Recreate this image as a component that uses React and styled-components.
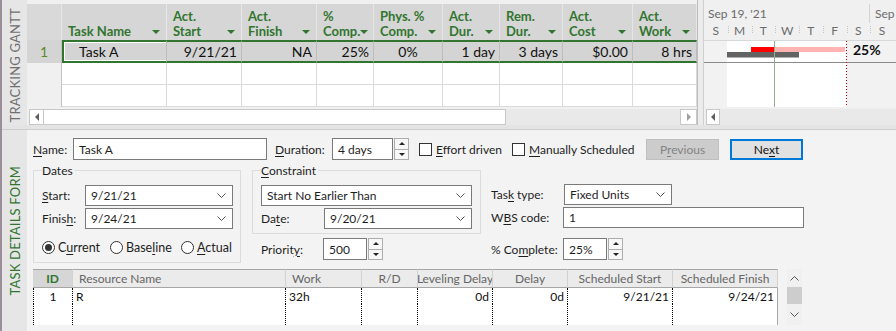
import React from 'react'
import styled, { createGlobalStyle } from 'styled-components'

const GREEN = '#31752f'

const GlobalStyle = createGlobalStyle`
  html, body { margin: 0; padding: 0; background: #f3f3f3; }
  body { font-family: Lato, "Noto Sans", sans-serif; }
`

const columns = [
  { title: ['Task Name'], w: 105, v: 'Task A', align: 'left' },
  { title: ['Act.', 'Start'], w: 75, v: '9/21/21', align: 'right' },
  { title: ['Act.', 'Finish'], w: 75, v: 'NA', align: 'right' },
  { title: ['%', 'Comp.'], w: 57, v: '25%', align: 'right' },
  { title: ['Phys. %', 'Comp.'], w: 69, v: '0%', align: 'center' },
  { title: ['Act.', 'Dur.'], w: 57, v: '1 day', align: 'right' },
  { title: ['Rem.', 'Dur.'], w: 63, v: '3 days', align: 'right' },
  { title: ['Act.', 'Cost'], w: 70, v: '$0.00', align: 'right' },
  { title: ['Act.', 'Work'], w: 64, v: '8 hrs', align: 'right' },
]

const days = ['S', 'M', 'T', 'W', 'T', 'F', 'S', 'S']

const resCols = [
  { title: 'ID', w: 40, v: '1', head: 'id', align: 'center' },
  { title: 'Resource Name', w: 213, v: 'R', head: 'left', align: 'left' },
  { title: 'Work', w: 76, v: '32h', head: 'left', align: 'left' },
  { title: 'R/D', w: 56, v: '', head: 'center', align: 'left' },
  { title: 'Leveling Delay', w: 75, v: '0d', head: 'center', align: 'right' },
  { title: 'Delay', w: 75, v: '0d', head: 'center', align: 'right' },
  { title: 'Scheduled Start', w: 105, v: '9/21/21', head: 'center', align: 'right' },
  { title: 'Scheduled Finish', w: 105, v: '9/24/21', head: 'center', align: 'right', last: true },
]

const Screen = styled.div`
  width: 896px;
  height: 331px;
  overflow: hidden;
  box-sizing: border-box;
  border-left: 2px solid #9b8e99;
  display: flex;
  flex-direction: column;
  background: #f3f3f3;
  color: #1e1e1e;
  font-family: Lato, "Noto Sans", sans-serif;
`

const TopPane = styled.div`
  height: 125px;
  display: flex;
  background: #f0f0f0;
`

const Splitter = styled.div`
  height: 4px;
  background: #e4e4e4;
  border-bottom: 1px solid #cdcdcd;
`

const BottomPane = styled.div`
  flex: 1;
  display: flex;
  min-height: 0;
`

const SideStrip = styled.div`
  width: 25px;
  flex: none;
  background: #e6e6e6;
  display: flex;
  align-items: center;
  justify-content: center;
  padding-top: ${p => p.$offset || 0}px;
  box-sizing: border-box;
`

const SideText = styled.span`
  writing-mode: vertical-rl;
  transform: rotate(180deg);
  font-size: 13px;
  letter-spacing: 0.2px;
  white-space: nowrap;
  color: ${p => p.$color};
`

/* ---------- sheet ---------- */

const SheetPanel = styled.div`
  width: 670px;
  flex: none;
  padding-top: 4px;
  display: flex;
  flex-direction: column;
`

const Sheet = styled.div`
  display: grid;
  grid-template-columns: 35px ${columns.map(c => c.w + 'px').join(' ')};
  grid-template-rows: 36px 23px 22px 22px;
`

const Corner = styled.div`
  background: #d9d9d9;
  border-right: 1px solid #e6e6e6;
`

const HeadCell = styled.div`
  background: #d6d6d6;
  border-right: 1px solid #e6e6e6;
  box-sizing: border-box;
  display: flex;
  align-items: flex-end;
  padding: 0 6px 1px 6px;
  color: ${GREEN};
  font-weight: 700;
  font-size: 13px;
  line-height: 15px;
`

const HeadTitle = styled.div`
  white-space: nowrap;
`

const SortArrow = styled.span`
  margin-left: auto;
  margin-bottom: 5px;
  flex: none;
  width: 0;
  height: 0;
  border-left: 4px solid transparent;
  border-right: 4px solid transparent;
  border-top: 4px solid ${GREEN};
`

const RowNum = styled.div`
  background: ${p => (p.$active ? '#d4d4d4' : '#f0f0f0')};
  border-right: 1px solid #c4c4c4;
  box-sizing: border-box;
  display: flex;
  align-items: center;
  justify-content: center;
  color: #5c8a1f;
  font-size: 14px;
`

const DataCell = styled.div`
  box-sizing: border-box;
  background: #d4d4d4;
  border-top: 2px solid ${GREEN};
  border-bottom: 2px solid ${GREEN};
  border-right: 1px solid #bdbdbd;
  border-left: ${p => (p.$first ? `2px solid ${GREEN}` : 'none')};
  box-shadow: ${p => (p.$first ? 'inset 1px 1px 0 #fff, inset 0 -1px 0 #fff' : 'none')};
  display: flex;
  align-items: center;
  justify-content: ${p => (p.$align === 'right' ? 'flex-end' : p.$align === 'center' ? 'center' : 'flex-start')};
  padding: 0 4px 0 ${p => (p.$first ? 15 : 4)}px;
  font-size: 14px;
  color: #111;
  white-space: nowrap;
`

const EmptyCell = styled.div`
  background: #fff;
  border-right: 1px solid #dadada;
  border-bottom: 1px solid #dadada;
`

const HScroll = styled.div`
  height: 16px;
  margin: 2px 0 0 ${p => p.$indent}px;
  display: flex;
  background: #e9e9e9;
`

const ScrollBtn = styled.div`
  width: ${p => p.$w || 15}px;
  flex: none;
  box-sizing: border-box;
  background: #fff;
  border: 1px solid #c8c8c8;
  display: flex;
  align-items: center;
  justify-content: center;
`

const ScrollThumb = styled.div`
  width: ${p => p.$w}px;
  flex: none;
  box-sizing: border-box;
  background: #fff;
  border: 1px solid #c8c8c8;
  border-left: none;
`

const Track = styled.div`
  flex: 1;
`

const Tri = styled.span`
  width: 0;
  height: 0;
  border-top: 4px solid transparent;
  border-bottom: 4px solid transparent;
  ${p => (p.$dir === 'left' ? 'border-right: 4px solid #606060;' : 'border-left: 4px solid #a0a0a0;')}
`

const Divider = styled.div`
  width: 5px;
  flex: none;
  background: #ececec;
  border-left: 1px solid #bdbdbd;
`

/* ---------- gantt ---------- */

const GanttPanel = styled.div`
  flex: 1;
  padding-top: 4px;
  border-left: 1px solid #cfcfcf;
  display: flex;
  flex-direction: column;
`

const GanttHead = styled.div`
  height: 37px;
  box-sizing: border-box;
  background: #f0f0f0;
  border-bottom: 1px solid #d8d8d8;
  color: #6b6b6b;
  font-size: 12px;
`

const TopTier = styled.div`
  height: 19px;
  display: flex;
  align-items: center;
`

const WeekLabel = styled.div`
  width: ${p => p.$w}px;
  flex: none;
  box-sizing: border-box;
  padding-left: ${p => p.$pad}px;
  border-right: ${p => (p.$sep ? '1px solid #d4d4d4' : 'none')};
  height: 100%;
  display: flex;
  align-items: center;
  white-space: nowrap;
`

const BottomTier = styled.div`
  height: 17px;
  display: grid;
  grid-template-columns: repeat(8, 23.75px);
`

const DayCell = styled.div`
  position: relative;
  display: flex;
  justify-content: center;
  align-items: center;
  padding-bottom: 3px;
  &::before {
    content: '';
    position: absolute;
    left: 0;
    top: 3px;
    height: 7px;
    border-left: ${p => (p.$tick ? '1px dotted #c4c4c4' : 'none')};
  }
`

const Chart = styled.svg`
  display: block;
`

/* ---------- form ---------- */

const FormArea = styled.div`
  flex: 1;
  padding: 8px 0 0 6px;
  display: flex;
  flex-direction: column;
  font-size: 12px;
  color: #1e1e1e;
`

const Line = styled.div`
  display: flex;
  align-items: center;
  height: ${p => p.$h || 21}px;
  margin-top: ${p => p.$mt || 0}px;
  padding-left: ${p => p.$pl || 0}px;
  flex: none;
`

const Label = styled.span`
  width: ${p => p.$w}px;
  margin-left: ${p => p.$ml || 0}px;
  flex: none;
  white-space: nowrap;
`

const Mn = styled.u`
  text-underline-offset: 2px;
`

const TextBox = styled.div`
  width: ${p => p.$w}px;
  height: ${p => p.$h || 21}px;
  flex: none;
  box-sizing: border-box;
  border: 1px solid #7a7a7a;
  background: #fff;
  display: flex;
  align-items: center;
  padding-left: 5px;
`

const SelectBox = styled(TextBox)`
  justify-content: space-between;
  padding-right: 6px;
`

const Spinner = styled.div`
  width: 15px;
  height: 22px;
  margin-left: 1px;
  flex: none;
  display: flex;
  flex-direction: column;
`

const SpinBtn = styled.div`
  flex: 1;
  box-sizing: border-box;
  border: 1px solid #adadad;
  background: #f7f7f7;
  display: flex;
  align-items: center;
  justify-content: center;
  & + & {
    border-top: none;
  }
`

const SpinTri = styled.span`
  width: 0;
  height: 0;
  border-left: 3px solid transparent;
  border-right: 3px solid transparent;
  ${p => (p.$up ? 'border-bottom: 3px solid #222;' : 'border-top: 3px solid #222;')}
`

const CheckItem = styled.div`
  width: ${p => p.$w}px;
  margin-left: ${p => p.$ml || 0}px;
  flex: none;
  display: flex;
  align-items: center;
  gap: 4px;
  white-space: nowrap;
`

const CheckBox = styled.span`
  width: 13px;
  height: 13px;
  box-sizing: border-box;
  border: 1px solid #333;
  background: #fff;
  flex: none;
`

const Button = styled.div`
  width: 73px;
  height: 21px;
  margin-left: ${p => p.$ml || 0}px;
  flex: none;
  box-sizing: border-box;
  display: flex;
  align-items: center;
  justify-content: center;
  background: ${p => (p.$primary ? '#e1e1e1' : '#cccccc')};
  border: ${p => (p.$primary ? '2px solid #0078d7' : '1px solid #bfbfbf')};
  color: ${p => (p.$primary ? '#111' : '#838383')};
`

const MidRow = styled.div`
  display: flex;
  align-items: flex-start;
  margin-top: 2px;
  flex: none;
`

const Group = styled.div`
  width: ${p => p.$w}px;
  margin: 8px 0 0 ${p => p.$ml || 0}px;
  flex: none;
  box-sizing: border-box;
  border: 1px solid #dcdcdc;
  padding: 0 0 ${p => p.$pb}px 8px;
`

const GroupTitle = styled.div`
  width: fit-content;
  margin-top: -8px;
  padding: 0 2px 0 0;
  line-height: 16px;
  background: #f3f3f3;
`

const Column = styled.div`
  display: flex;
  flex-direction: column;
  margin-left: ${p => p.$ml || 0}px;
  padding-top: ${p => p.$pt || 0}px;
  flex: none;
`

const RadioItem = styled.div`
  width: ${p => p.$w}px;
  flex: none;
  display: flex;
  align-items: center;
  gap: 3px;
  font-size: 12.5px;
  white-space: nowrap;
`

const Radio = styled.span`
  width: 13px;
  height: 13px;
  box-sizing: border-box;
  border-radius: 50%;
  border: 1px solid #333;
  background: #fff;
  display: flex;
  align-items: center;
  justify-content: center;
  flex: none;
  &::after {
    content: '';
    width: 7px;
    height: 7px;
    border-radius: 50%;
    background: ${p => (p.$on ? '#333' : 'transparent')};
  }
`

/* ---------- resource table ---------- */

const ResWrap = styled.div`
  display: flex;
  margin-top: 6px;
  height: 56px;
  flex: none;
`

const ResGrid = styled.div`
  display: grid;
  grid-template-columns: ${resCols.map(c => c.w + 'px').join(' ')};
  grid-template-rows: 19px 16px 21px;
  background: #fff;
`

const ResHead = styled.div`
  box-sizing: border-box;
  background: ${p => (p.$kind === 'id' ? '#d6d6d6' : '#ebebeb')};
  border-top: 1px solid #a6a6a6;
  border-bottom: 1px solid #a6a6a6;
  border-right: 1px solid #d2d2d2;
  display: flex;
  align-items: center;
  justify-content: ${p => (p.$kind === 'left' ? 'flex-start' : 'center')};
  padding-left: ${p => (p.$kind === 'left' ? 6 : 0)}px;
  overflow: hidden;
  white-space: nowrap;
  color: ${p => (p.$kind === 'id' ? GREEN : '#666')};
  font-weight: ${p => (p.$kind === 'id' ? 700 : 400)};
`

const ResCell = styled.div`
  box-sizing: border-box;
  border-right: ${p => (p.$last ? '1px solid #a6a6a6' : '1px dotted #000')};
  border-left: ${p => (p.$first ? '1px dotted #000' : 'none')};
  display: flex;
  align-items: center;
  justify-content: ${p => (p.$align === 'right' ? 'flex-end' : p.$align === 'center' ? 'center' : 'flex-start')};
  padding: 0 3px;
  white-space: nowrap;
  color: #111;
`

const VScroll = styled.div`
  width: 15px;
  margin-left: 9px;
  flex: none;
  display: flex;
  flex-direction: column;
  background: #f0f0f0;
`

const VBtn = styled.div`
  height: ${p => p.$h}px;
  display: flex;
  align-items: center;
  justify-content: center;
`

const VThumb = styled.div`
  height: 17px;
  background: #cdcdcd;
`

const Chevron = ({ up }) => (
  <svg width="9" height="5" viewBox="0 0 9 5">
    <polyline
      points={up ? '0.5,4.5 4.5,0.5 8.5,4.5' : '0.5,0.5 4.5,4.5 8.5,0.5'}
      fill="none"
      stroke="#555"
      strokeWidth="1"
    />
  </svg>
)

const Select = ({ w, children }) => (
  <SelectBox $w={w}>
    <span>{children}</span>
    <Chevron />
  </SelectBox>
)

const Spin = () => (
  <Spinner>
    <SpinBtn><SpinTri $up /></SpinBtn>
    <SpinBtn><SpinTri /></SpinBtn>
  </Spinner>
)

const GanttChart = () => (
  <Chart width="192" height="66" viewBox="0 0 192 66">
    <rect x="0" y="0" width="192" height="66" fill="#fff" />
    <rect x="0" y="0" width="23" height="66" fill="#f2f2f2" />
    <rect x="142" y="0" width="50" height="66" fill="#f2f2f2" />
    <line x1="0" y1="21.5" x2="192" y2="21.5" stroke="#8a8a8a" />
    <rect x="47" y="6" width="23" height="5" fill="#ff0000" />
    <rect x="70" y="6" width="71" height="5" fill="#ffb3b3" />
    <rect x="23" y="11" width="72" height="5.5" fill="#636363" />
    <line x1="70.5" y1="0" x2="70.5" y2="66" stroke="#8fb08f" />
    <line x1="142.5" y1="0" x2="142.5" y2="66" stroke="#c00000" strokeDasharray="1 2" />
    <text x="149" y="14" fontFamily="Lato, sans-serif" fontWeight="700" fontSize="14" fill="#111">25%</text>
  </Chart>
)

export default function App() {
  return (
    <>
      <GlobalStyle />
      <Screen>
        <TopPane>
          <SideStrip $offset={5}>
            <SideText $color="#6f6f6f">TRACKING GANTT</SideText>
          </SideStrip>

          <SheetPanel>
            <Sheet>
              <Corner />
              {columns.map((c, i) => (
                <HeadCell key={'h' + i}>
                  <HeadTitle>
                    {c.title.map((t, j) => <div key={j}>{t}</div>)}
                  </HeadTitle>
                  <SortArrow />
                </HeadCell>
              ))}

              <RowNum $active>1</RowNum>
              {columns.map((c, i) => (
                <DataCell key={'d' + i} $first={i === 0} $align={c.align}>{c.v}</DataCell>
              ))}

              {[0, 1].map(r => (
                <React.Fragment key={'r' + r}>
                  <RowNum />
                  {columns.map((c, i) => <EmptyCell key={i} />)}
                </React.Fragment>
              ))}
            </Sheet>
            <HScroll $indent={2}>
              <ScrollBtn><Tri $dir="left" /></ScrollBtn>
              <ScrollThumb $w={462} />
              <Track />
              <ScrollBtn $w={17}><Tri /></ScrollBtn>
            </HScroll>
          </SheetPanel>

          <Divider />

          <GanttPanel>
            <GanttHead>
              <TopTier>
                <WeekLabel $w={166} $pad={4} $sep>Sep 19, '21</WeekLabel>
                <WeekLabel $w={26} $pad={5}>Sep</WeekLabel>
              </TopTier>
              <BottomTier>
                {days.map((d, i) => (
                  <DayCell key={i} $tick={i > 0}>{d}</DayCell>
                ))}
              </BottomTier>
            </GanttHead>
            <GanttChart />
            <HScroll $indent={2}>
              <ScrollBtn $w={14}><Tri $dir="left" /></ScrollBtn>
              <Track />
            </HScroll>
          </GanttPanel>
        </TopPane>

        <Splitter />

        <BottomPane>
          <SideStrip>
            <SideText $color={GREEN}>TASK DETAILS FORM</SideText>
          </SideStrip>

          <FormArea>
            <Line $h={22}>
              <Label $w={40}><Mn>N</Mn>ame:</Label>
              <TextBox $w={194} $h={22}>Task A</TextBox>
              <Label $w={57} $ml={8}><Mn>D</Mn>uration:</Label>
              <TextBox $w={61} $h={22}>4 days</TextBox>
              <Spin />
              <CheckItem $w={93} $ml={10}>
                <CheckBox />
                <span><Mn>E</Mn>ffort driven</span>
              </CheckItem>
              <CheckItem $w={134}>
                <CheckBox />
                <span><Mn>M</Mn>anually Scheduled</span>
              </CheckItem>
              <Button><span>P<Mn>r</Mn>evious</span></Button>
              <Button $primary $ml={11}><span>Ne<Mn>x</Mn>t</span></Button>
            </Line>

            <MidRow>
              <Group $w={208} $pb={6}>
                <GroupTitle>Dates</GroupTitle>
                <Line $mt={6}>
                  <Label $w={43}><Mn>S</Mn>tart:</Label>
                  <Select w={148}>9/21/21</Select>
                </Line>
                <Line $mt={2}>
                  <Label $w={43}>Finis<Mn>h</Mn>:</Label>
                  <Select w={148}>9/24/21</Select>
                </Line>
                <Line $h={18} $mt={9}>
                  <RadioItem $w={68}><Radio $on /><span>C<Mn>u</Mn>rrent</span></RadioItem>
                  <RadioItem $w={71}><Radio /><span>Base<Mn>l</Mn>ine</span></RadioItem>
                  <RadioItem $w={55}><Radio /><span><Mn>A</Mn>ctual</span></RadioItem>
                </Line>
              </Group>

              <Column $ml={11}>
                <Group $w={229} $pb={4}>
                  <GroupTitle><Mn>C</Mn>onstraint</GroupTitle>
                  <Line $mt={6}>
                    <Select w={211}>Start No Earlier Than</Select>
                  </Line>
                  <Line $mt={2}>
                    <Label $w={63}>Da<Mn>t</Mn>e:</Label>
                    <Select w={148}>9/20/21</Select>
                  </Line>
                </Group>
                <Line $h={22} $mt={4} $pl={9}>
                  <Label $w={62}>Priorit<Mn>y</Mn>:</Label>
                  <TextBox $w={44} $h={22}>500</TextBox>
                  <Spin />
                </Line>
              </Column>

              <Column $ml={10} $pt={22}>
                <Line>
                  <Label $w={73}>Tas<Mn>k</Mn> type:</Label>
                  <Select w={108}>Fixed Units</Select>
                </Line>
                <Line $mt={2}>
                  <Label $w={72}>W<Mn>B</Mn>S code:</Label>
                  <TextBox $w={241}>1</TextBox>
                </Line>
                <Line $h={22} $mt={10}>
                  <Label $w={72}>% Co<Mn>m</Mn>plete:</Label>
                  <TextBox $w={44} $h={22}>25%</TextBox>
                  <Spin />
                </Line>
              </Column>
            </MidRow>

            <ResWrap>
              <ResGrid>
                {resCols.map((c, i) => (
                  <ResHead key={'h' + i} $kind={c.head}>{c.title}</ResHead>
                ))}
                {resCols.map((c, i) => (
                  <ResCell key={'v' + i} $first={i === 0} $last={c.last} $align={c.align}>{c.v}</ResCell>
                ))}
                {resCols.map((c, i) => (
                  <ResCell key={'e' + i} $first={i === 0} $last={c.last} />
                ))}
              </ResGrid>
              <VScroll>
                <VBtn $h={18}><Chevron up /></VBtn>
                <VThumb />
                <VBtn $h={21}><Chevron /></VBtn>
              </VScroll>
            </ResWrap>
          </FormArea>
        </BottomPane>
      </Screen>
    </>
  )
}
